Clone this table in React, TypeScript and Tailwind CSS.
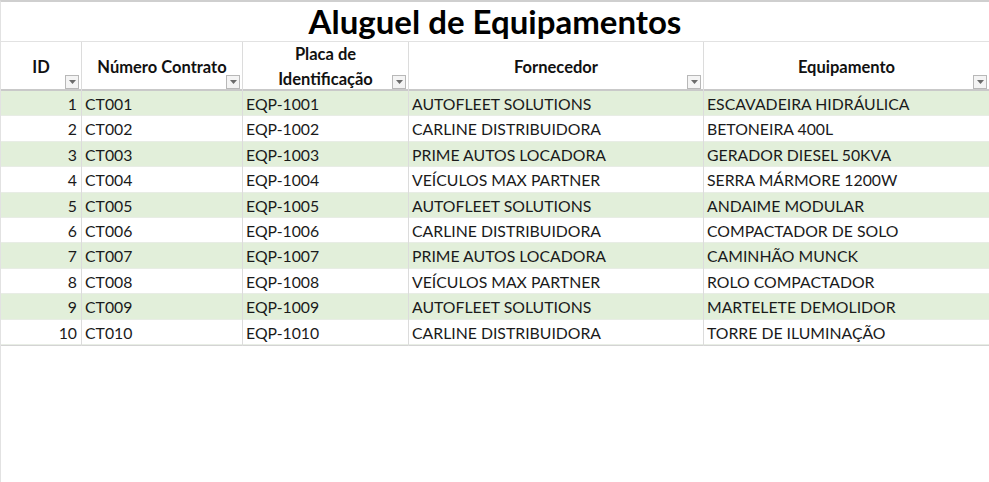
import React from "react";

const rows = [
  { id: 1, contrato: "CT001", placa: "EQP-1001", fornecedor: "AUTOFLEET SOLUTIONS", equipamento: "ESCAVADEIRA HIDRÁULICA" },
  { id: 2, contrato: "CT002", placa: "EQP-1002", fornecedor: "CARLINE DISTRIBUIDORA", equipamento: "BETONEIRA 400L" },
  { id: 3, contrato: "CT003", placa: "EQP-1003", fornecedor: "PRIME AUTOS LOCADORA", equipamento: "GERADOR DIESEL 50KVA" },
  { id: 4, contrato: "CT004", placa: "EQP-1004", fornecedor: "VEÍCULOS MAX PARTNER", equipamento: "SERRA MÁRMORE 1200W" },
  { id: 5, contrato: "CT005", placa: "EQP-1005", fornecedor: "AUTOFLEET SOLUTIONS", equipamento: "ANDAIME MODULAR" },
  { id: 6, contrato: "CT006", placa: "EQP-1006", fornecedor: "CARLINE DISTRIBUIDORA", equipamento: "COMPACTADOR DE SOLO" },
  { id: 7, contrato: "CT007", placa: "EQP-1007", fornecedor: "PRIME AUTOS LOCADORA", equipamento: "CAMINHÃO MUNCK" },
  { id: 8, contrato: "CT008", placa: "EQP-1008", fornecedor: "VEÍCULOS MAX PARTNER", equipamento: "ROLO COMPACTADOR" },
  { id: 9, contrato: "CT009", placa: "EQP-1009", fornecedor: "AUTOFLEET SOLUTIONS", equipamento: "MARTELETE DEMOLIDOR" },
  { id: 10, contrato: "CT010", placa: "EQP-1010", fornecedor: "CARLINE DISTRIBUIDORA", equipamento: "TORRE DE ILUMINAÇÃO" },
];

const cols = "grid grid-cols-[81px_161px_166px_295px_1fr]";

// small excel autofilter button
const FilterBtn = () => (
  <span className="absolute right-[2px] bottom-[3px] w-[14px] h-[14px] border border-[#b8b8b8] bg-[#f4f4f4] flex items-center justify-center">
    <svg width="7" height="4" viewBox="0 0 7 4">
      <path d="M0 0h7L3.5 4z" fill="#6b6b6b" />
    </svg>
  </span>
);

const Head = ({ children, last }: { children: React.ReactNode; last?: boolean }) => (
  <div className={`relative flex items-center justify-center text-center font-bold text-[16.5px] leading-[25px] text-[#111] ${last ? "" : "border-r border-[#dcdcdc]"}`}>
    <div>{children}</div>
    <FilterBtn />
  </div>
);

export default function App() {
  return (
    <div className="w-[989px] h-[482px] bg-white overflow-hidden border-t-2 border-[#cfcfcf] border-l border-l-[#e2e2e2] text-[#1a1a1a]" style={{ fontFamily: "Lato, 'Open Sans', sans-serif" }}>
      <div className="h-[40px] flex items-center justify-center border-b border-[#e2e2e2]">
        <h1 className="font-bold text-[33px] leading-none text-black -mt-[1px]">Aluguel de Equipamentos</h1>
      </div>
      <div className={`${cols} h-[49px] border-b-2 border-[#c9c9c9]`}>
        <Head>ID</Head>
        <Head>Número Contrato</Head>
        <Head>
          Placa de
          <br />
          Identificação
        </Head>
        <Head>Fornecedor</Head>
        <Head last>Equipamento</Head>
      </div>
      {rows.map((r) => (
        <div
          key={r.id}
          className={`${cols} h-[25.4px] text-[15.8px] leading-[26px] border-b border-[#e8ede5] ${r.id % 2 ? "bg-[#e2efda]" : "bg-white"}`}
        >
          <div className="text-right pr-[4px] border-r border-[#dcdcdc]">{r.id}</div>
          <div className="pl-[3px] border-r border-[#dcdcdc]">{r.contrato}</div>
          <div className="pl-[3px] border-r border-[#dcdcdc]">{r.placa}</div>
          <div className="pl-[3px] border-r border-[#dcdcdc]">{r.fornecedor}</div>
          <div className="pl-[3px]">{r.equipamento}</div>
        </div>
      ))}
      <div className="border-t border-[#d4d4d4]" />
    </div>
  );
}
